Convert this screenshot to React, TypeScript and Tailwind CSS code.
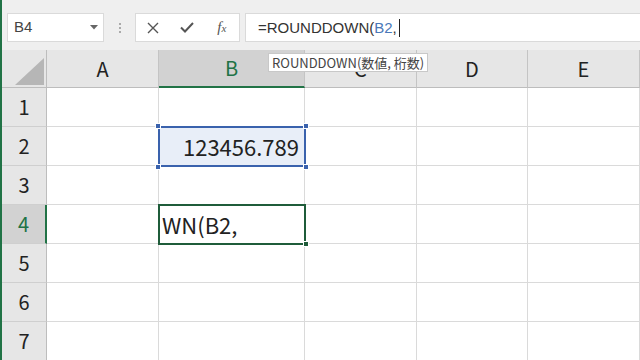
import React from 'react';

const cols = [
  { label: 'A', w: 'w-[112px]' },
  { label: 'B', w: 'w-[146px]' },
  { label: 'C', w: 'w-[112px]' },
  { label: 'D', w: 'w-[111px]' },
  { label: 'E', w: 'w-[112px]' },
];

const rows = [1, 2, 3, 4, 5, 6, 7];

const font = { fontFamily: '"Noto Sans CJK JP", "Noto Sans", sans-serif' };

function Handle({ x, y, color }: { x: string; y: string; color: string }) {
  return <div className={`absolute w-[6px] h-[6px] border border-white ${color} ${x} ${y}`} />;
}

export default function App() {
  return (
    <div className="relative w-[640px] h-[360px] overflow-hidden bg-white border-l-2 border-[#217346]" style={font}>
      {/* Formula bar */}
      <div className="h-[50px] bg-[#efefef] flex items-start pt-[13px] pl-[5px]">
        <div className="w-[97px] h-[29px] bg-white border border-[#dadada] flex items-center justify-between pl-[6px] pr-[5px]">
          <span className="text-[15px] text-[#444]" style={{ fontFamily: '"Liberation Sans", sans-serif' }}>B4</span>
          <svg width="8" height="5" viewBox="0 0 8 5"><path d="M0 0h8L4 4.5z" fill="#666" /></svg>
        </div>
        <div className="w-[31px] h-[29px] flex flex-col items-center justify-center gap-[2px]">
          <span className="w-[2px] h-[2px] bg-[#aaa]" />
          <span className="w-[2px] h-[2px] bg-[#aaa]" />
          <span className="w-[2px] h-[2px] bg-[#aaa]" />
        </div>
        <div className="w-[105px] h-[29px] bg-white border border-[#dadada] flex items-center">
          <div className="w-[35px] flex justify-center">
            <svg width="12" height="12" viewBox="0 0 12 12"><path d="M1 1l10 10M11 1L1 11" stroke="#555" strokeWidth="1.4" /></svg>
          </div>
          <div className="w-[35px] flex justify-center">
            <svg width="14" height="11" viewBox="0 0 14 11"><path d="M1 5.5l4 4L13 1" stroke="#555" strokeWidth="2" fill="none" /></svg>
          </div>
          <div className="w-[35px] flex justify-center">
            <span className="italic text-[15px] text-[#555]" style={{ fontFamily: '"Liberation Serif", serif' }}>f<span className="text-[11px]">x</span></span>
          </div>
        </div>
        <div className="ml-[5px] flex-1 h-[29px] bg-white border border-r-0 border-[#dadada] flex items-center pl-[12px]">
          <span className="text-[15px] text-[#333] leading-none" style={{ fontFamily: '"Liberation Sans", sans-serif' }}>
            =ROUNDDOWN(<span className="text-[#4a78b8]">B2</span>,
          </span>
          <span className="w-[1px] h-[18px] bg-[#222] ml-[2px]" />
        </div>
      </div>

      {/* Column headers */}
      <div className="flex h-[38px]">
        <div className="w-[45px] bg-[#e6e6e6] border-r border-b border-[#bdbdbd] relative">
          <svg className="absolute right-[2px] bottom-[2px]" width="29" height="27" viewBox="0 0 29 27"><path d="M29 0V27H0z" fill="#b6b6b6" /></svg>
        </div>
        {cols.map((c) => (
          <div
            key={c.label}
            className={`${c.w} flex items-center justify-center text-[20px] border-r border-[#c4c4c4] ${
              c.label === 'B'
                ? 'bg-[#d2d2d2] text-[#217346] border-b-2 border-b-[#217346]'
                : 'bg-[#e6e6e6] text-[#222] border-b border-b-[#bdbdbd]'
            }`}
          >
            {c.label}
          </div>
        ))}
      </div>

      {/* Rows */}
      {rows.map((r) => (
        <div key={r} className="flex h-[39px]">
          <div
            className={`w-[45px] flex items-center justify-center text-[20px] border-b border-[#cfcfcf] ${
              r === 4
                ? 'bg-[#d2d2d2] text-[#217346] border-r-2 border-r-[#217346]'
                : 'bg-[#e6e6e6] text-[#222] border-r border-r-[#bdbdbd]'
            }`}
          >
            {r}
          </div>
          {cols.map((c) => (
            <div
              key={c.label}
              className={`${c.w} border-r border-b border-[#dadada] flex items-center text-[22px] text-[#222] ${
                c.label === 'B' && r === 2 ? 'bg-[#e8eef8] justify-end pr-[5px]' : 'pl-[3px]'
              }`}
            >
              {c.label === 'B' && r === 2 && '123456.789'}
              {c.label === 'B' && r === 4 && 'WN(B2,'}
            </div>
          ))}
        </div>
      ))}

      {/* B2 reference highlight */}
      <div className="absolute left-[156px] top-[126px] w-[148px] h-[41px] border-2 border-[#3a62ad]" />
      <Handle x="left-[153px]" y="top-[123px]" color="bg-[#3a62ad]" />
      <Handle x="left-[301px]" y="top-[123px]" color="bg-[#3a62ad]" />
      <Handle x="left-[153px]" y="top-[164px]" color="bg-[#3a62ad]" />
      <Handle x="left-[301px]" y="top-[164px]" color="bg-[#3a62ad]" />

      {/* Active cell B4 */}
      <div className="absolute left-[156px] top-[204px] w-[148px] h-[41px] border-2 border-[#1f5c3a]" />
      <div className="absolute left-[301px] top-[241px] w-[6px] h-[6px] bg-[#1f5c3a] border border-white" />

      {/* Function tooltip */}
      <div className="absolute left-[266px] top-[53px] w-[160px] h-[19px] bg-white border border-[#c8c8c8] flex items-center pl-[3px] text-[13px] text-[#444] leading-none">
        ROUNDDOWN(数値, 桁数)
      </div>
    </div>
  );
}
